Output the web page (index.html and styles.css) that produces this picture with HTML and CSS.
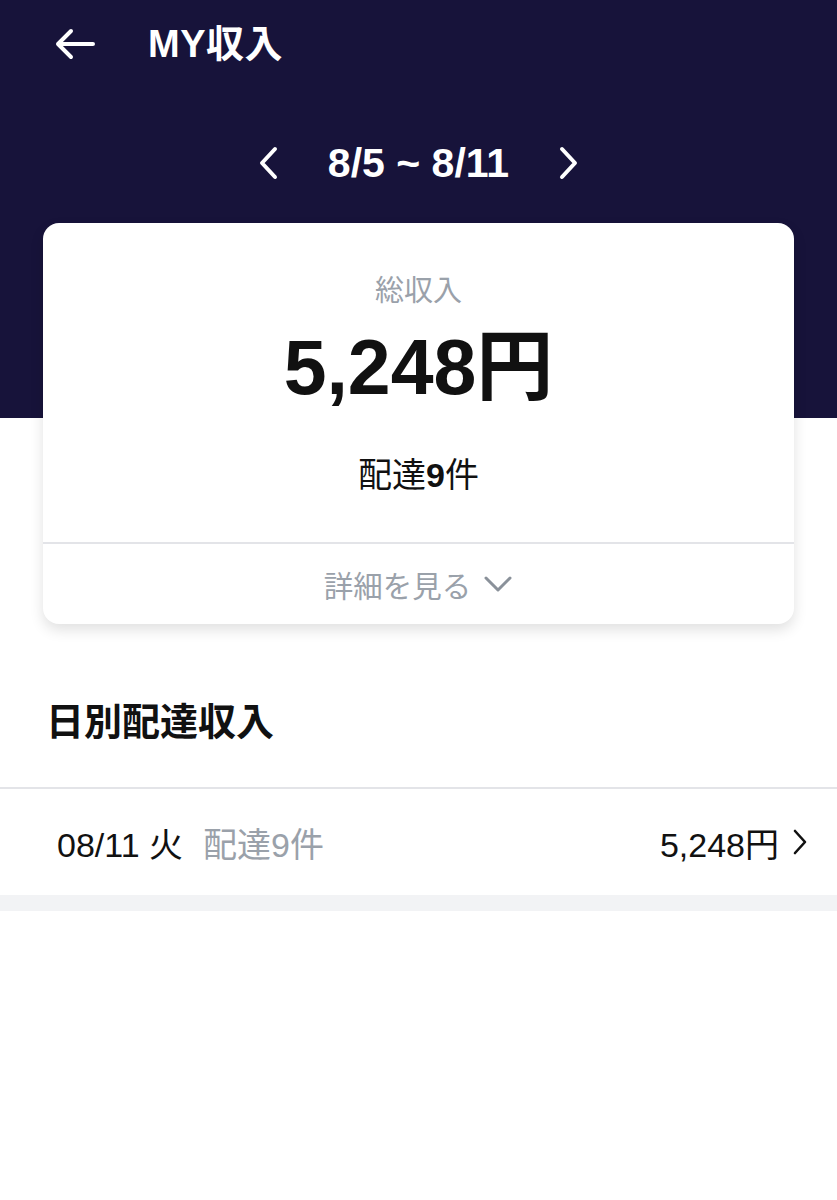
FILE: index.html
```html
<!DOCTYPE html>
<html lang="ja">
<head>
<meta charset="utf-8">
<link rel="stylesheet" href="styles.css">
</head>
<body>
<div class="page">
  <header class="hero">
    <div class="topbar">
      <svg class="back" width="44" height="34" viewBox="0 0 44 34"><path d="M40 17H5M18 4L5 17l13 13" fill="none" stroke="#fff" stroke-width="4" stroke-linecap="round" stroke-linejoin="round"/></svg>
      <h1 class="title">MY収入</h1>
    </div>
    <div class="datenav">
      <svg class="chev" width="22" height="34" viewBox="0 0 22 34"><path d="M17 3L4 17l13 14" fill="none" stroke="#fff" stroke-width="4" stroke-linecap="round" stroke-linejoin="round"/></svg>
      <span class="range">8/5 ~ 8/11</span>
      <svg class="chev" width="22" height="34" viewBox="0 0 22 34"><path d="M5 3l13 14L5 31" fill="none" stroke="#fff" stroke-width="4" stroke-linecap="round" stroke-linejoin="round"/></svg>
    </div>
  </header>
  <section class="card">
    <div class="card-main">
      <div class="label">総収入</div>
      <div class="total">5,248円</div>
      <div class="count">配達<b>9</b>件</div>
    </div>
    <div class="card-more">
      <span>詳細を見る</span>
      <svg width="30" height="20" viewBox="0 0 30 20"><path d="M3 4l12 12L27 4" fill="none" stroke="#8a919a" stroke-width="3" stroke-linecap="round" stroke-linejoin="round"/></svg>
    </div>
  </section>
  <h2 class="section-title">日別配達収入</h2>
  <div class="list">
    <div class="row">
      <span class="date">08/11 火</span>
      <span class="sub">配達9件</span>
      <span class="amount">5,248円</span>
      <svg class="row-chev" width="18" height="28" viewBox="0 0 18 28"><path d="M4 3l10 11L4 25" fill="none" stroke="#111" stroke-width="2.6" stroke-linecap="round" stroke-linejoin="round"/></svg>
    </div>
  </div>
  <div class="band"></div>
</div>
</body>
</html>
```
FILE: styles.css
```css
* { box-sizing: border-box; margin: 0; padding: 0; }
body {
  margin: 0;
  background: #fff;
  font-family: "Liberation Sans", "Noto Sans CJK JP", sans-serif;
  color: #111;
}
.page { width: 837px; }
.hero {
  background: #17133a;
  height: 418px;
  padding-top: 22px;
}
.topbar {
  display: flex;
  align-items: center;
  height: 44px;
  padding-left: 53px;
}
.back { flex: none; }
.title {
  color: #fff;
  font-size: 38px;
  font-weight: 700;
  margin-left: 51px;
  line-height: 44px;
  letter-spacing: 0.5px;
}
.datenav {
  display: flex;
  align-items: center;
  justify-content: center;
  margin-top: 75px;
  height: 44px;
  gap: 48px;
  color: #fff;
}
.range {
  font-size: 41px;
  font-weight: 700;
  line-height: 44px;
}
.card {
  margin: -195px 43px 0;
  background: #fff;
  border-radius: 16px;
  box-shadow: 0 6px 14px rgba(0,0,0,0.12);
  position: relative;
}
.card-main {
  display: flex;
  flex-direction: column;
  align-items: center;
  padding-top: 48px;
  height: 321px;
  border-bottom: 2px solid #e3e4e8;
}
.label {
  color: #9aa1aa;
  font-size: 29px;
  line-height: 40px;
}
.total {
  font-size: 77px;
  font-weight: 700;
  line-height: 90px;
  margin-top: 11px;
}
.count {
  font-size: 34px;
  line-height: 40px;
  margin-top: 43px;
}
.count b { font-weight: 700; }
.card-more {
  height: 80px;
  display: flex;
  align-items: center;
  justify-content: center;
  gap: 12px;
  color: #9aa1aa;
  font-size: 29.5px;
  padding-left: 0;
}
.section-title {
  font-size: 38px;
  font-weight: 700;
  line-height: 44px;
  margin: 76px 0 0 46px;
}
.list {
  margin-top: 43px;
  border-top: 2px solid #e3e4e8;
}
.row {
  height: 106px;
  display: flex;
  align-items: center;
  padding: 0 28px 0 57px;
  font-size: 34px;
}
.date { color: #111; }
.sub { color: #9aa1aa; margin-left: 20px; }
.amount { margin-left: auto; }
.row-chev { margin-left: 12px; }
.band {
  height: 16px;
  background: #f2f3f5;
}
```
